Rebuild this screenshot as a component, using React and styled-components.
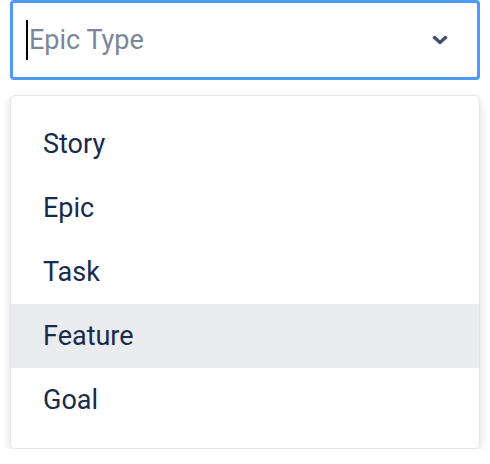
import React from "react";
import styled, { createGlobalStyle } from "styled-components";

const GlobalStyle = createGlobalStyle`
  body {
    margin: 0;
    background: #ffffff;
    font-family: Roboto, "Noto Sans", sans-serif;
  }
`;

const options = ["Story", "Epic", "Task", "Feature", "Goal"];

export default function App() {
  return (
    <>
      <GlobalStyle />
      <Wrap>
        <Control>
          <Caret />
          <Placeholder>Epic Type</Placeholder>
          <Chevron viewBox="0 0 16 10">
            <path d="M2.5 2.5 L8 7.5 L13.5 2.5" />
          </Chevron>
        </Control>
        <Menu>
          {options.map((o) => (
            <Option key={o} $active={o === "Feature"}>
              {o}
            </Option>
          ))}
        </Menu>
      </Wrap>
    </>
  );
}

const Wrap = styled.div`
  padding: 0 10px;
  display: flex;
  flex-direction: column;
  gap: 15px;
`;

const Control = styled.div`
  box-sizing: border-box;
  height: 80px;
  border: 3px solid #4c9aff;
  border-radius: 4px;
  display: flex;
  align-items: center;
  padding: 0 29px 0 13px;
`;

const Caret = styled.span`
  width: 2px;
  height: 40px;
  background: #000;
  margin-right: 1px;
`;

const Placeholder = styled.span`
  flex: 1;
  font-size: 27px;
  color: #7a869a;
`;

const Chevron = styled.svg`
  width: 16px;
  height: 10px;
  fill: none;
  stroke: #42526e;
  stroke-width: 3.4;
  stroke-linecap: round;
  stroke-linejoin: round;
`;

const Menu = styled.div`
  box-sizing: border-box;
  border: 1px solid #e4e6ea;
  border-radius: 5px;
  padding: 16px 0;
  box-shadow: 0 4px 10px rgba(9, 30, 66, 0.15);
`;

const Option = styled.div`
  height: 64px;
  display: flex;
  align-items: center;
  padding: 0 32px;
  font-size: 27px;
  color: #172b4d;
  background: ${(p) => (p.$active ? "#ebecf0" : "transparent")};
`;
